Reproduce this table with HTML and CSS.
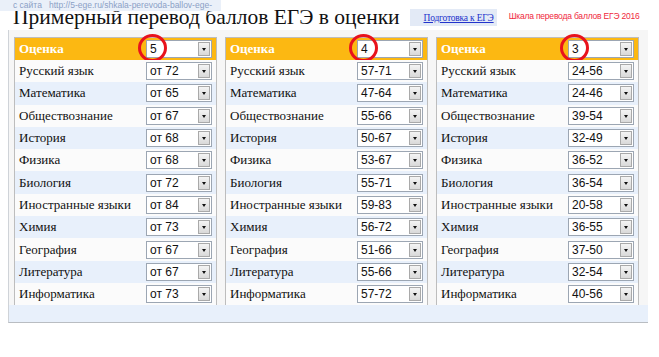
FILE: index.html
```html
<!DOCTYPE html>
<html lang="ru">
<head>
<meta charset="utf-8">
<link rel="stylesheet" href="styles.css">
</head>
<body>
<div class="source">с сайта&nbsp;&nbsp; http://5-ege.ru/shkala-perevoda-ballov-ege-</div>
<div class="top">
  <h1 class="title">Примерный перевод баллов ЕГЭ в оценки</h1>
  <div class="linkbox"><a class="link" href="#">Подготовка к ЕГЭ</a></div>
  <div class="scale">Шкала перевода баллов ЕГЭ 2016</div>
</div>
<div class="panel">
  <div class="cols">
    <div class="col">
      <div class="row head"><span class="label">Оценка</span><div class="sel"><span class="val">5</span><span class="btn"></span><span class="ring"></span></div></div>
      <div class="row"><span class="label">Русский язык</span><div class="sel"><span class="val">от 72</span><span class="btn"></span></div></div>
      <div class="row alt"><span class="label">Математика</span><div class="sel"><span class="val">от 65</span><span class="btn"></span></div></div>
      <div class="row"><span class="label">Обществознание</span><div class="sel"><span class="val">от 67</span><span class="btn"></span></div></div>
      <div class="row alt"><span class="label">История</span><div class="sel"><span class="val">от 68</span><span class="btn"></span></div></div>
      <div class="row"><span class="label">Физика</span><div class="sel"><span class="val">от 68</span><span class="btn"></span></div></div>
      <div class="row alt"><span class="label">Биология</span><div class="sel"><span class="val">от 72</span><span class="btn"></span></div></div>
      <div class="row"><span class="label">Иностранные языки</span><div class="sel"><span class="val">от 84</span><span class="btn"></span></div></div>
      <div class="row alt"><span class="label">Химия</span><div class="sel"><span class="val">от 73</span><span class="btn"></span></div></div>
      <div class="row"><span class="label">География</span><div class="sel"><span class="val">от 67</span><span class="btn"></span></div></div>
      <div class="row alt"><span class="label">Литература</span><div class="sel"><span class="val">от 67</span><span class="btn"></span></div></div>
      <div class="row"><span class="label">Информатика</span><div class="sel"><span class="val">от 73</span><span class="btn"></span></div></div>
    </div>
    <div class="col">
      <div class="row head"><span class="label">Оценка</span><div class="sel"><span class="val">4</span><span class="btn"></span><span class="ring"></span></div></div>
      <div class="row"><span class="label">Русский язык</span><div class="sel"><span class="val">57-71</span><span class="btn"></span></div></div>
      <div class="row alt"><span class="label">Математика</span><div class="sel"><span class="val">47-64</span><span class="btn"></span></div></div>
      <div class="row"><span class="label">Обществознание</span><div class="sel"><span class="val">55-66</span><span class="btn"></span></div></div>
      <div class="row alt"><span class="label">История</span><div class="sel"><span class="val">50-67</span><span class="btn"></span></div></div>
      <div class="row"><span class="label">Физика</span><div class="sel"><span class="val">53-67</span><span class="btn"></span></div></div>
      <div class="row alt"><span class="label">Биология</span><div class="sel"><span class="val">55-71</span><span class="btn"></span></div></div>
      <div class="row"><span class="label">Иностранные языки</span><div class="sel"><span class="val">59-83</span><span class="btn"></span></div></div>
      <div class="row alt"><span class="label">Химия</span><div class="sel"><span class="val">56-72</span><span class="btn"></span></div></div>
      <div class="row"><span class="label">География</span><div class="sel"><span class="val">51-66</span><span class="btn"></span></div></div>
      <div class="row alt"><span class="label">Литература</span><div class="sel"><span class="val">55-66</span><span class="btn"></span></div></div>
      <div class="row"><span class="label">Информатика</span><div class="sel"><span class="val">57-72</span><span class="btn"></span></div></div>
    </div>
    <div class="col">
      <div class="row head"><span class="label">Оценка</span><div class="sel"><span class="val">3</span><span class="btn"></span><span class="ring"></span></div></div>
      <div class="row"><span class="label">Русский язык</span><div class="sel"><span class="val">24-56</span><span class="btn"></span></div></div>
      <div class="row alt"><span class="label">Математика</span><div class="sel"><span class="val">24-46</span><span class="btn"></span></div></div>
      <div class="row"><span class="label">Обществознание</span><div class="sel"><span class="val">39-54</span><span class="btn"></span></div></div>
      <div class="row alt"><span class="label">История</span><div class="sel"><span class="val">32-49</span><span class="btn"></span></div></div>
      <div class="row"><span class="label">Физика</span><div class="sel"><span class="val">36-52</span><span class="btn"></span></div></div>
      <div class="row alt"><span class="label">Биология</span><div class="sel"><span class="val">36-54</span><span class="btn"></span></div></div>
      <div class="row"><span class="label">Иностранные языки</span><div class="sel"><span class="val">20-58</span><span class="btn"></span></div></div>
      <div class="row alt"><span class="label">Химия</span><div class="sel"><span class="val">36-55</span><span class="btn"></span></div></div>
      <div class="row"><span class="label">География</span><div class="sel"><span class="val">37-50</span><span class="btn"></span></div></div>
      <div class="row alt"><span class="label">Литература</span><div class="sel"><span class="val">32-54</span><span class="btn"></span></div></div>
      <div class="row"><span class="label">Информатика</span><div class="sel"><span class="val">40-56</span><span class="btn"></span></div></div>
    </div>
  </div>
  <div class="footer"></div>
</div>
</body>
</html>
```
FILE: styles.css
```css
html, body {
  margin: 0;
  padding: 0;
  background: #ffffff;
}
body {
  width: 659px;
  height: 357px;
  overflow: hidden;
  position: relative;
  font-family: "Liberation Serif", "Times New Roman", serif;
}
.source {
  position: absolute;
  left: 0;
  top: 0;
  width: 208px;
  height: 11px;
  padding-left: 13px;
  background: #eaf0f9;
  color: #8aa0c6;
  font-family: "Liberation Sans", Arial, sans-serif;
  font-size: 8.5px;
  line-height: 10px;
  white-space: nowrap;
  z-index: 2;
}
.top {
  display: flex;
  align-items: flex-end;
  height: 30px;
  padding-left: 13px;
}
.title {
  margin: 0;
  font-weight: normal;
  font-size: 21.5px;
  line-height: 26px;
  color: #111;
  white-space: nowrap;
}
.linkbox {
  margin-left: 10px;
  margin-bottom: 4px;
  width: 87px;
  height: 17px;
  background: #e3eaf6;
  display: flex;
  align-items: center;
  justify-content: flex-end;
  padding-right: 3px;
  box-sizing: border-box;
}
.link {
  color: #2233cc;
  font-size: 9.5px;
  text-decoration: underline;
  letter-spacing: -0.2px;
  white-space: nowrap;
}
.scale {
  margin-left: 12px;
  margin-bottom: 8px;
  color: #f0283c;
  font-family: "Liberation Sans", Arial, sans-serif;
  font-size: 8.5px;
  letter-spacing: -0.2px;
  line-height: 12px;
  white-space: nowrap;
}
.panel {
  margin-left: 8px;
  width: 639px;
  border-left: 1px solid #cfd3d8;
  border-bottom: 1px solid #b9bdc2;
  background: #f6f6f6;
  padding-top: 7px;
}
.cols {
  display: flex;
  gap: 8px;
  padding-left: 5px;
}
.col {
  width: 201px;
  border: 1px solid #bdbdbd;
  border-bottom: none;
  background: #fff;
}
.row {
  display: flex;
  align-items: center;
  height: 22.3px;
  padding-left: 4px;
  padding-right: 4px;
  position: relative;
  background: #fbfbfb;
  font-size: 13px;
  color: #111;
}
.row.alt {
  background: #e8f0fb;
}
.row.head {
  height: 22px;
  background: #fcb812;
  color: #fff;
  font-weight: bold;
}
.label {
  flex: 1;
  white-space: nowrap;
}
.sel {
  position: relative;
  width: 66px;
  height: 18px;
  box-sizing: border-box;
  border: 1px solid #9ca6b3;
  background: #fff;
  display: flex;
  align-items: center;
  font-weight: normal;
}
.val {
  flex: 1;
  padding-left: 3px;
  font-family: "Liberation Sans", Arial, sans-serif;
  font-size: 12px;
  color: #111;
}
.btn {
  width: 12px;
  height: 14px;
  margin-right: 1px;
  box-sizing: border-box;
  border: 1px solid #a9a9a9;
  background: linear-gradient(#f4f4f4, #d9d9d9);
  position: relative;
}
.btn::after {
  content: "";
  position: absolute;
  left: 3px;
  top: 5px;
  border-left: 2.5px solid transparent;
  border-right: 2.5px solid transparent;
  border-top: 3px solid #111;
}
.ring {
  position: absolute;
  left: -9px;
  top: -7px;
  width: 29px;
  height: 28px;
  box-sizing: border-box;
  border: 3px solid #e8121c;
  border-radius: 50%;
}
.footer {
  height: 17px;
  background: #e8f0fb;
}
```
